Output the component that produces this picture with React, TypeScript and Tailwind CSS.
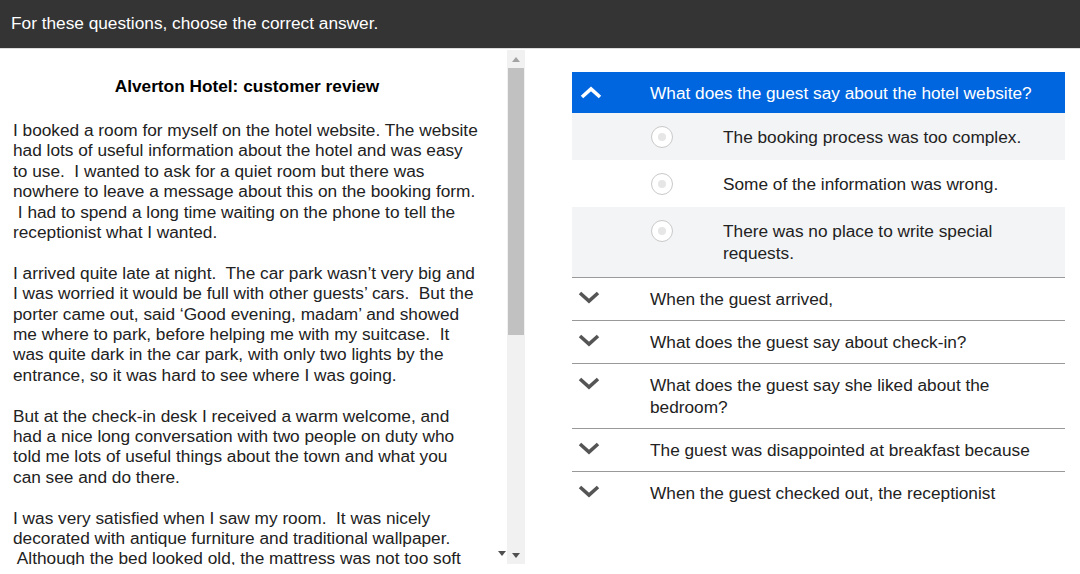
import React from "react";

const paragraphs: string[][] = [
  [
    "I booked a room for myself on the hotel website. The website",
    "had lots of useful information about the hotel and was easy",
    "to use.  I wanted to ask for a quiet room but there was",
    "nowhere to leave a message about this on the booking form.",
    " I had to spend a long time waiting on the phone to tell the",
    "receptionist what I wanted.",
  ],
  [
    "I arrived quite late at night.  The car park wasn\u2019t very big and",
    "I was worried it would be full with other guests\u2019 cars.  But the",
    "porter came out, said \u2018Good evening, madam\u2019 and showed",
    "me where to park, before helping me with my suitcase.  It",
    "was quite dark in the car park, with only two lights by the",
    "entrance, so it was hard to see where I was going.",
  ],
  [
    "But at the check-in desk I received a warm welcome, and",
    "had a nice long conversation with two people on duty who",
    "told me lots of useful things about the town and what you",
    "can see and do there.",
  ],
  [
    "I was very satisfied when I saw my room.  It was nicely",
    "decorated with antique furniture and traditional wallpaper.",
    " Although the bed looked old, the mattress was not too soft",
    "or too hard, and I slept very well.",
  ],
];

const options = [
  "The booking process was too complex.",
  "Some of the information was wrong.",
  "There was no place to write special requests.",
];

const questions = [
  "When the guest arrived,",
  "What does the guest say about check-in?",
  "What does the guest say she liked about the bedroom?",
  "The guest was disappointed at breakfast because",
  "When the guest checked out, the receptionist",
];

const Chevron = ({ up = false, color }: { up?: boolean; color: string }) => (
  <svg width="22" height="13" viewBox="0 0 22 13" className="block">
    <polyline
      points={up ? "2,11 11,3 20,11" : "2,2 11,10 20,2"}
      fill="none"
      stroke={color}
      strokeWidth="3.6"
    />
  </svg>
);

const Radio = () => (
  <div className="w-[22px] h-[22px] rounded-full border-[1.5px] border-[#c9c9c9] bg-white flex items-center justify-center shrink-0">
    <div className="w-[8px] h-[8px] rounded-full bg-[#e6e6e6]" />
  </div>
);

export default function App() {
  return (
    <div className="w-[1080px] h-[574px] bg-white overflow-hidden font-['Liberation_Sans',Arial,sans-serif] text-[17.25px]">
      {/* Instruction bar */}
      <div className="h-[48px] bg-[#343434] text-white flex items-center px-[11px]">
        For these questions, choose the correct answer.
      </div>
      <div className="h-[1px] bg-[#dcdcdc]" />

      <div className="flex">
        {/* Reading text */}
        <div className="relative w-[507px] h-[516px] overflow-hidden pl-[13px] pt-[27px] text-[#222] leading-[20.4px]">
          <h2 className="w-[468px] text-center font-bold text-black mb-[23.5px]">
            Alverton Hotel: customer review
          </h2>
          {paragraphs.map((lines, i) => (
            <div key={i} className="mb-[20.4px]">
              {lines.map((line, j) => (
                <div key={j} className="whitespace-pre">
                  {line}
                </div>
              ))}
            </div>
          ))}
          <div className="absolute right-[1px] top-[502px] w-0 h-0 border-l-[4px] border-r-[4px] border-t-[5px] border-l-transparent border-r-transparent border-t-[#505050]" />
        </div>

        {/* Scrollbar */}
        <div className="w-[18px] h-[514px] mt-[1px] bg-[#f1f1f1] flex flex-col">
          <div className="h-[18px] flex items-center justify-center">
            <div className="w-0 h-0 border-l-[4px] border-r-[4px] border-b-[5px] border-l-transparent border-r-transparent border-b-[#a3a3a3]" />
          </div>
          <div className="mx-[1px] h-[267px] bg-[#c1c1c1]" />
          <div className="flex-1" />
          <div className="h-[18px] flex items-center justify-center">
            <div className="w-0 h-0 border-l-[4px] border-r-[4px] border-t-[5px] border-l-transparent border-r-transparent border-t-[#505050]" />
          </div>
        </div>

        {/* Questions */}
        <div className="ml-[47px] w-[493px] pt-[23px] text-[#222] leading-[22px]">
          <div className="border-b border-[#999]">
            <div className="flex bg-[#0066df] text-white pt-[10px] pb-[9px]">
              <div className="w-[78px] shrink-0 pl-[8px] pt-[4px]">
                <Chevron up color="#ffffff" />
              </div>
              <div className="flex-1 pr-[20px]">
                What does the guest say about the hotel website?
              </div>
            </div>
            {options.map((opt, i) => (
              <div
                key={opt}
                className={`flex pl-[79px] pr-[20px] pt-[12.6px] pb-[12.6px] ${
                  i % 2 === 0 ? "bg-[#f3f4f6]" : "bg-white"
                }`}
              >
                <Radio />
                <div className="ml-[50px] flex-1">{opt}</div>
              </div>
            ))}
          </div>
          {questions.map((q, i) => (
            <div
              key={q}
              className={`flex py-[10px] ${
                i < questions.length - 1 ? "border-b border-[#999]" : ""
              }`}
            >
              <div className="w-[78px] shrink-0 pl-[6px] pt-[3px]">
                <Chevron color="#555555" />
              </div>
              <div className="flex-1 pr-[20px]">{q}</div>
            </div>
          ))}
        </div>
      </div>
    </div>
  );
}
